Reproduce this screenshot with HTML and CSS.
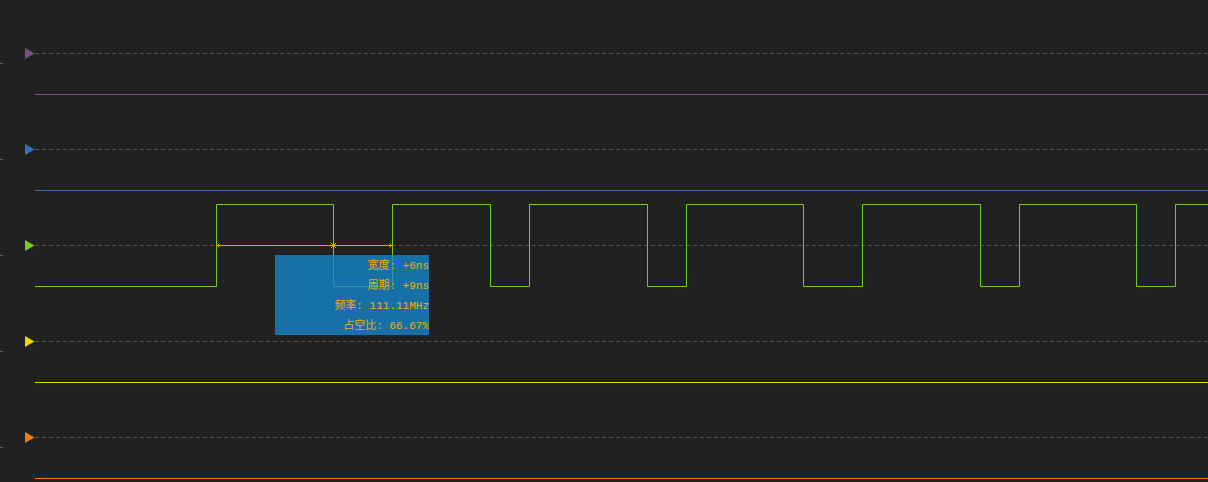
FILE: index.html
```html
<!DOCTYPE html>
<html lang="zh-CN">
<head>
    <meta charset="UTF-8">
    <meta name="viewport" content="width=device-width, initial-scale=1.0">
    <title>逻辑分析仪</title>
    <link rel="stylesheet" href="styles.css">
</head>
<body>
    <div class="scope">
        <svg class="wave" width="1208" height="482" viewBox="0 0 1208 482">
            <!-- left axis ticks -->
            <g class="tick">
                <line x1="0" y1="63.5" x2="3" y2="63.5"/>
                <line x1="0" y1="159.5" x2="3" y2="159.5"/>
                <line x1="0" y1="255.5" x2="3" y2="255.5"/>
                <line x1="0" y1="351.5" x2="3" y2="351.5"/>
                <line x1="0" y1="447.5" x2="3" y2="447.5"/>
            </g>
            <!-- trigger level dashed lines -->
            <g class="level">
                <line x1="35" y1="53.5" x2="1208" y2="53.5"/>
                <line x1="35" y1="149.5" x2="1208" y2="149.5"/>
                <line x1="35" y1="245.5" x2="1208" y2="245.5"/>
                <line x1="35" y1="341.5" x2="1208" y2="341.5"/>
                <line x1="35" y1="437.5" x2="1208" y2="437.5"/>
            </g>
            <!-- channel markers -->
            <polygon class="ch1" points="25,48 34.5,53.5 25,59"/>
            <polygon class="ch2" points="25,144 34.5,149.5 25,155"/>
            <polygon class="ch3" points="25,240 34.5,245.5 25,251"/>
            <polygon class="ch4" points="25,336 34.5,341.5 25,347"/>
            <polygon class="ch5" points="25,432 34.5,437.5 25,443"/>
            <!-- channel signals -->
            <line class="sig ch1-line" x1="35" y1="94.5" x2="1208" y2="94.5"/>
            <line class="sig ch2-line" x1="35" y1="190.5" x2="1208" y2="190.5"/>
            <path class="sig ch3-line" d="M35 286.5 H216.5 V204.5 H333.5 V286.5 H392.5 V204.5 H490.5 V286.5 H529.5 V204.5 H647.5 V286.5 H686.5 V204.5 H803.5 V286.5 H862.5 V204.5 H980.5 V286.5 H1019.5 V204.5 H1136.5 V286.5 H1175.5 V204.5 H1208"/>
            <line class="sig ch4-line" x1="35" y1="382.5" x2="1208" y2="382.5"/>
            <line class="sig ch5-line" x1="35" y1="478.5" x2="1208" y2="478.5"/>
            <!-- measurement cursor -->
            <g class="measure">
                <line x1="216.5" y1="245.5" x2="392.5" y2="245.5"/>
                <path d="M219.5 243.5 L217.5 245.5 L219.5 247.5"/>
                <path d="M331 243 L336 248 M336 243 L331 248 M333.5 242.5 V248.5"/>
                <path d="M389.5 243.5 L391.5 245.5 L389.5 247.5"/>
            </g>
        </svg>
        <div class="tip">
            <div class="tip-row">宽度: +6ns</div>
            <div class="tip-row">周期: +9ns</div>
            <div class="tip-row">频率: 111.11MHz</div>
            <div class="tip-row">占空比: 66.67%</div>
        </div>
    </div>
</body>
</html>
```

FILE: styles.css
```css
body {
    margin: 0;
    background-color: #212121;
    font-family: "Liberation Mono", "Noto Sans CJK SC", monospace;
}
.scope {
    position: relative;
    width: 1208px;
    height: 482px;
    overflow: hidden;
    background-color: #212121;
}
.wave {
    display: block;
}
.tick line {
    stroke: #5a5a5a;
    stroke-width: 1;
}
.level line {
    stroke: #505050;
    stroke-width: 1;
    stroke-dasharray: 4 3;
}
.sig {
    fill: none;
    stroke-width: 1;
}
.ch1 { fill: #7a4e8b; }
.ch2 { fill: #3470b6; }
.ch3 { fill: #6fcf1c; }
.ch4 { fill: #f2d400; }
.ch5 { fill: #f27c0c; }
.ch1-line { stroke: #7a4e8b; }
.ch2-line { stroke: #3470b6; }
.ch3-line { stroke: #6fcf1c; }
.ch4-line { stroke: #f2d400; }
.ch5-line { stroke: #f27c0c; }
.measure line,
.measure path {
    fill: none;
    stroke: #f0a400;
    stroke-width: 1;
}
.tip {
    position: absolute;
    left: 275px;
    top: 255px;
    width: 154px;
    height: 80px;
    padding-top: 1px;
    box-sizing: border-box;
    background-color: rgba(23, 133, 204, 0.8);
    overflow: hidden;
}
.tip-row {
    height: 20px;
    line-height: 20px;
    font-size: 11px;
    color: #f0ac00;
    text-align: right;
    white-space: nowrap;
}
```
